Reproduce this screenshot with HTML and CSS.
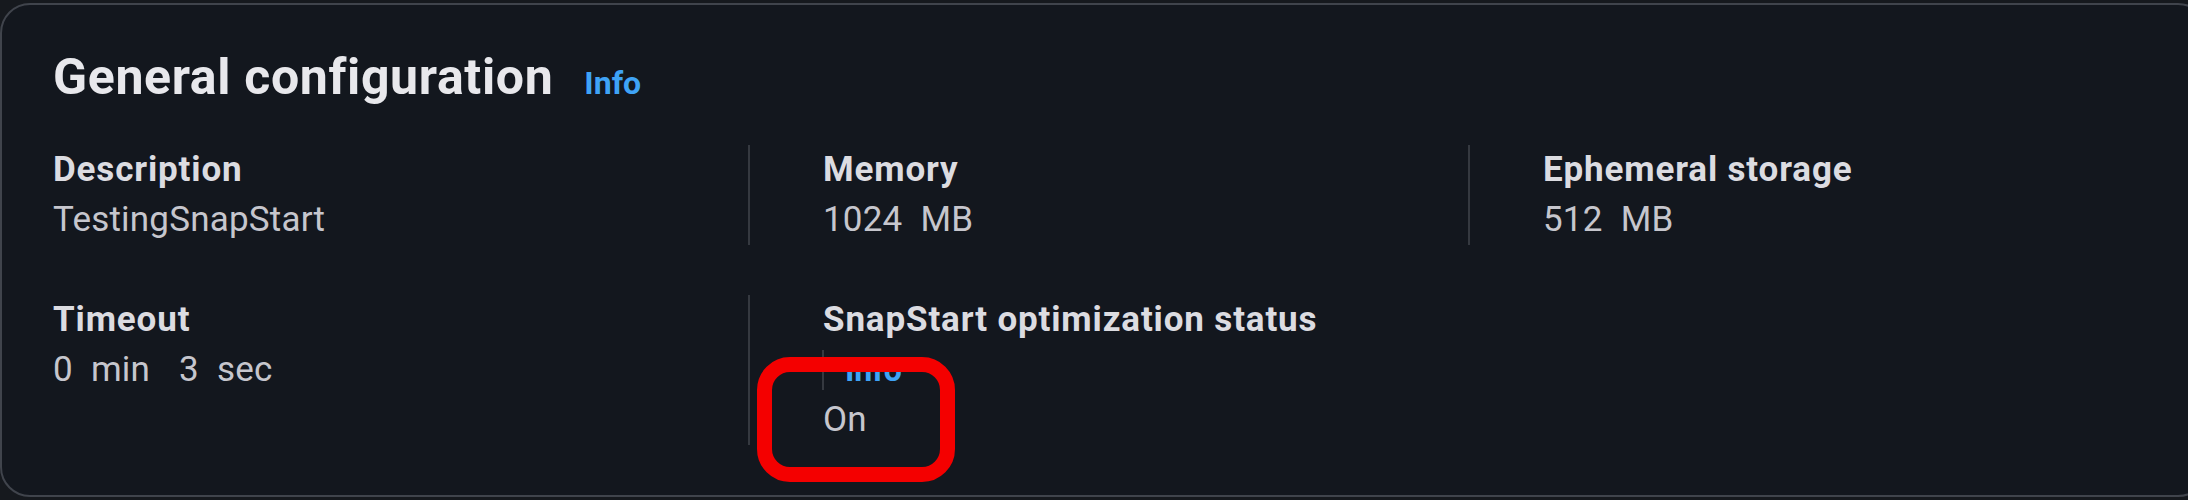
FILE: index.html
```html
<!DOCTYPE html>
<html lang="en">
<head>
<meta charset="utf-8">
<title>General configuration</title>
<link rel="stylesheet" href="styles.css">
</head>
<body>
<div class="card">
  <div class="header">
    <h2 class="title">General configuration</h2>
    <a class="info-link header-info">Info</a>
  </div>
  <div class="grid">
    <div class="cell first">
      <div class="label">Description</div>
      <div class="value">TestingSnapStart</div>
    </div>
    <div class="cell">
      <div class="label">Memory</div>
      <div class="value"><span class="num">1024</span><span class="unit">MB</span></div>
    </div>
    <div class="cell">
      <div class="label">Ephemeral storage</div>
      <div class="value"><span class="num">512</span><span class="unit">MB</span></div>
    </div>
    <div class="cell first">
      <div class="label">Timeout</div>
      <div class="value"><span class="num">0</span><span class="unit">min</span><span class="num second">3</span><span class="unit">sec</span></div>
    </div>
    <div class="cell">
      <div class="label">SnapStart optimization status</div>
      <div class="info-line"><span class="mini-divider"></span><a class="info-link">Info</a></div>
      <div class="value">On</div>
    </div>
    <div class="cell empty"></div>
  </div>
  <div class="annotation"></div>
</div>
</body>
</html>
```

FILE: styles.css
```css
* { box-sizing: border-box; }

html, body {
  margin: 0;
  padding: 0;
}

body {
  background: #16191e;
  padding-top: 3px;
  width: 2188px;
  height: 500px;
  overflow: hidden;
  font-family: Roboto, "Liberation Sans", sans-serif;
}

.card {
  position: relative;
  width: 2208px;
  background: #13171e;
  border: 2px solid #40444c;
  border-radius: 30px;
  padding: 42px 0 50px 51px;
}

.header {
  display: flex;
  align-items: baseline;
  height: 60px;
  margin-bottom: 38px;
}

.title {
  margin: 0;
  font-size: 50px;
  line-height: 60px;
  font-weight: 700;
  letter-spacing: 0.65px;
  color: #e8e8ec;
}

.info-link {
  color: #3fa3f6;
  font-weight: 700;
  font-size: 32px;
  text-decoration: none;
}

.header-info {
  margin-left: 31px;
}

.grid {
  display: grid;
  grid-template-columns: 695px 720px 1fr;
  row-gap: 50px;
}

.cell {
  border-left: 2px solid #353940;
  padding-left: 73px;
}

.cell.first {
  border-left: none;
  padding-left: 0;
}

.cell.empty {
  border-left: none;
}

.label {
  font-size: 35px;
  line-height: 50px;
  font-weight: 700;
  color: #dcdce1;
  letter-spacing: 0.85px;
}

.value {
  font-size: 35px;
  line-height: 50px;
  font-weight: 400;
  color: #c6c6cd;
  letter-spacing: 0.2px;
}

.unit {
  margin-left: 18px;
}

.num.second {
  margin-left: 29px;
}

.info-line {
  display: flex;
  align-items: center;
  height: 50px;
}

.mini-divider {
  width: 2px;
  height: 40px;
  background: #353940;
  margin-left: -1px;
  margin-right: 21px;
}

.annotation {
  position: absolute;
  left: 755px;
  top: 352px;
  width: 198px;
  height: 125px;
  border: 15px solid #f40000;
  border-radius: 33px;
}
```
